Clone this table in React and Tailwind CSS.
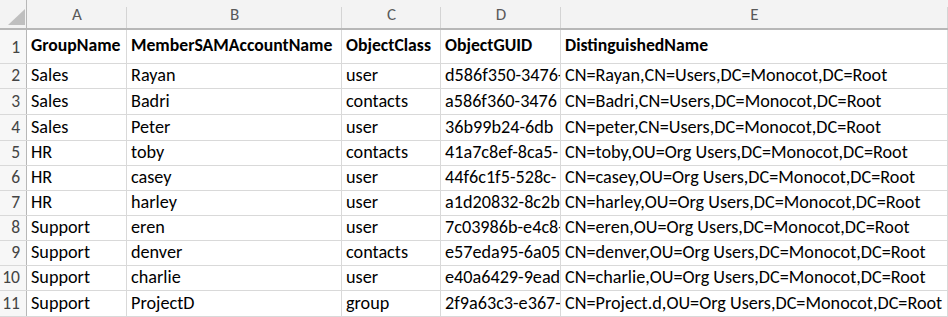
import React from 'react';

const cols = [
  { key: 'A', width: 'w-[100px]' },
  { key: 'B', width: 'w-[215px]' },
  { key: 'C', width: 'w-[99px]' },
  { key: 'D', width: 'w-[120px]' },
  { key: 'E', width: 'w-[387px]' },
];

const header = ['GroupName', 'MemberSAMAccountName', 'ObjectClass', 'ObjectGUID', 'DistinguishedName'];

// ObjectGUID est coupé par la colonne suivante, comme dans la feuille
const rows = [
  { h: 'h-[25px]', cells: ['Sales', 'Rayan', 'user', 'd586f350-3476-', 'CN=Rayan,CN=Users,DC=Monocot,DC=Root'] },
  { h: 'h-[26px]', cells: ['Sales', 'Badri', 'contacts', 'a586f360-3476', 'CN=Badri,CN=Users,DC=Monocot,DC=Root'] },
  { h: 'h-[26px]', cells: ['Sales', 'Peter', 'user', '36b99b24-6db', 'CN=peter,CN=Users,DC=Monocot,DC=Root'] },
  { h: 'h-[25px]', cells: ['HR', 'toby', 'contacts', '41a7c8ef-8ca5-', 'CN=toby,OU=Org Users,DC=Monocot,DC=Root'] },
  { h: 'h-[25px]', cells: ['HR', 'casey', 'user', '44f6c1f5-528c-', 'CN=casey,OU=Org Users,DC=Monocot,DC=Root'] },
  { h: 'h-[25px]', cells: ['HR', 'harley', 'user', 'a1d20832-8c2b', 'CN=harley,OU=Org Users,DC=Monocot,DC=Root'] },
  { h: 'h-[25px]', cells: ['Support', 'eren', 'user', '7c03986b-e4c8-', 'CN=eren,OU=Org Users,DC=Monocot,DC=Root'] },
  { h: 'h-[25px]', cells: ['Support', 'denver', 'contacts', 'e57eda95-6a05', 'CN=denver,OU=Org Users,DC=Monocot,DC=Root'] },
  { h: 'h-[25px]', cells: ['Support', 'charlie', 'user', 'e40a6429-9ead', 'CN=charlie,OU=Org Users,DC=Monocot,DC=Root'] },
  { h: 'h-[26px]', cells: ['Support', 'ProjectD', 'group', '2f9a63c3-e367-', 'CN=Project.d,OU=Org Users,DC=Monocot,DC=Root'] },
];

export default function App() {
  return (
    <div className="w-[948px] h-[317px] overflow-hidden bg-white text-[18.2px] text-black font-['Carlito','Lato',sans-serif] leading-none">
      {/* lettres de colonnes */}
      <div className="flex h-[30px] bg-[#f3f3f3] border-b-2 border-[#b7b7b7]">
        <div className="w-[27px] shrink-0 border-r border-[#b7b7b7] relative">
          <svg className="absolute left-0 top-0" width="27" height="28" viewBox="0 0 27 28">
            <polygon points="8,25 25,9 25,25" fill="#bfbfbf" />
          </svg>
        </div>
        {cols.map(c => (
          <div key={c.key} className={`${c.width} shrink-0 flex items-end justify-center pb-[5px] text-[#595959] text-[17px] relative`}>
            {c.key}
            <div className="absolute right-0 top-[7px] bottom-0 w-px bg-[#d4d4d4]" />
          </div>
        ))}
      </div>

      {/* ligne 1 */}
      <div className="flex h-[34px] border-b border-[#d9d9d9]">
        <div className="w-[27px] shrink-0 border-r border-[#b7b7b7] bg-[#f7f7f7] flex items-end justify-end pr-[6px] pb-[7px] text-[#444] text-[17.5px]">1</div>
        {header.map((t, i) => (
          <div key={t} className={`${cols[i].width} shrink-0 border-r border-[#d9d9d9] pl-[4px] flex items-center pb-[2px] overflow-hidden whitespace-nowrap font-bold text-[17.7px]`}>
            {t}
          </div>
        ))}
      </div>

      {rows.map((r, idx) => (
        <div key={idx} className={`flex ${r.h} border-b border-[#d9d9d9]`}>
          <div className="w-[27px] shrink-0 border-r border-[#b7b7b7] bg-[#f7f7f7] flex items-end justify-end pr-[6px] pb-[4px] text-[#444] text-[17.5px]">{idx + 2}</div>
          {r.cells.map((t, i) => (
            <div key={i} className={`${cols[i].width} shrink-0 border-r border-[#d9d9d9] pl-[4px] flex items-end pb-[4px] overflow-hidden whitespace-nowrap`}>
              {t}
            </div>
          ))}
        </div>
      ))}
    </div>
  );
}
